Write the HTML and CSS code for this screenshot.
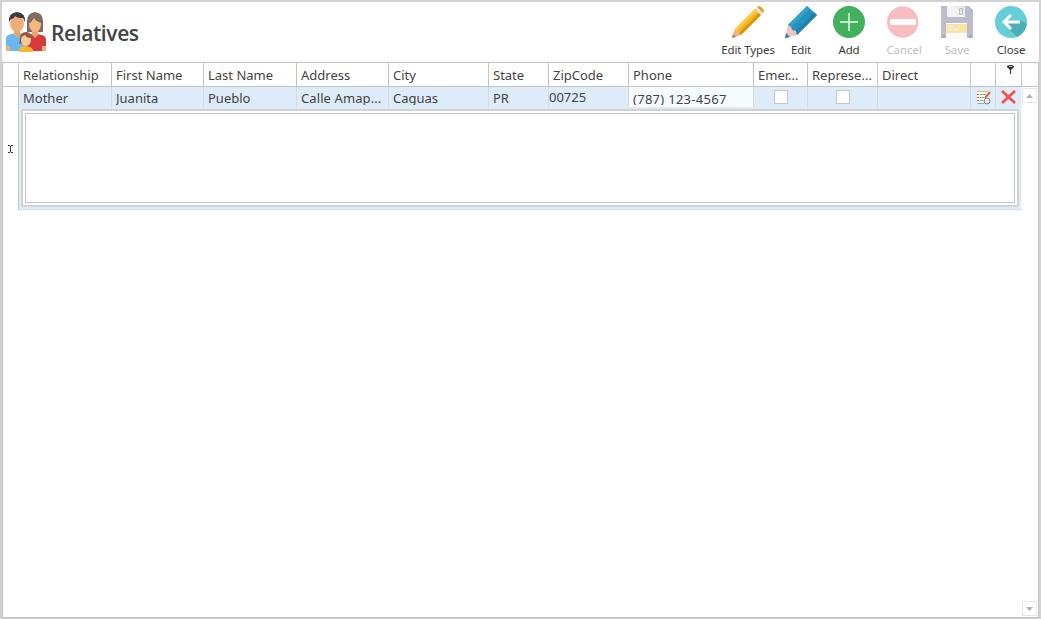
FILE: index.html
```html
<!DOCTYPE html>
<html lang="en">
<head>
    <meta charset="UTF-8">
    <title>Relatives</title>
    <link rel="stylesheet" href="styles.css">
</head>
<body>
    <div class="window">
        <header class="toolbar">
            <svg class="logo" viewBox="0 0 40 40">
                <path d="M0 39V27q0-4 5-5l4-1h5l6 3v15z" fill="#66b9f3"/>
                <path d="M20 39V25l6-3h5l5 1q4 1 4 5v11z" fill="#d63a3d"/>
                <path d="M21 20V9q0-8 8-9 8 1 8 9v11z" fill="#7d6d65"/>
                <path d="M8 18h6v5l-3 3-3-3zM26 17h6v6l-3 3-3-3z" fill="#e8a46d"/>
                <ellipse cx="11" cy="11.500" rx="7" ry="8.500" fill="#f0ad76"/>
                <path d="M3 10Q2 1 11 0q9 1 8 10l-2-4q-6 0-8-2-1 3-4 3z" fill="#3b3c40"/>
                <ellipse cx="29" cy="12" rx="6" ry="8" fill="#f5b680"/>
                <path d="M22 12V7q1-5 7-5 7 0 7 9-6-1-8-5-2 4-6 6z" fill="#7d6d65"/>
                <path d="M0 34h4v5H0zM36 34h4v5h-4z" fill="#efae79"/>
                <path d="M13 40v-2q0-4 6-4t8 4v2z" fill="#f6b632"/>
                <path d="M14 27q0-7 6-7t6 7l-2 4h-8l-3 1z" fill="#98582f"/>
                <ellipse cx="20" cy="28" rx="5" ry="6" fill="#fac99a"/>
                <path d="M15 25q1-4 5-4t5 5q-5 0-6-3z" fill="#98582f"/>
            </svg>
            <h1>Relatives</h1>
            <nav class="actions">
                <div class="action types">
                    <svg viewBox="0 0 32 32">
                        <path d="M0 32l3-9 6 6z" fill="#e8b48b"/>
                        <path d="M0 32l1-4 3 3z" fill="#a87c68"/>
                        <path d="M3 23L23 3l6 6L9 29z" fill="#f9b21b"/>
                        <path d="M7 27L27 7l2 2L9 29z" fill="#dc900f"/>
                        <path d="M3 23L23 3l2 2L5 25z" fill="#ffc846"/>
                        <path d="M23 3l2-2 6 6-2 2z" fill="#e3e3dc"/>
                        <path d="M25 1q2-2 4 0l2 2q2 2 0 4z" fill="#dda22c"/>
                    </svg>
                    <span>Edit Types</span>
                </div>
                <div class="action edit">
                    <svg viewBox="0 0 32 32">
                        <path d="M0 32l3-13 3-1 8 8-2 3z" fill="#f5c4bd"/>
                        <path d="M0 32l1-5 4 4z" fill="#2781a8"/>
                        <path d="M3 19L22 0l10 9-20 20-1-4-4-1-1-4z" fill="#2593bd"/>
                        <path d="M3 19L22 0l3 3L6 21z" fill="#35a1c9"/>
                        <path d="M11 25L29 6l3 3-20 20z" fill="#1d82ad"/>
                    </svg>
                    <span>Edit</span>
                </div>
                <div class="action add">
                    <svg viewBox="0 0 32 32">
                        <circle cx="16" cy="16" r="16" fill="#43b05c"/>
                        <path d="M16 7v18M7 16h18" stroke="#e8fbea" stroke-width="1.500"/>
                    </svg>
                    <span>Add</span>
                </div>
                <div class="action cancel disabled">
                    <svg viewBox="0 0 32 32">
                        <circle cx="15.700" cy="16" r="15.700" fill="#f7bdbf"/>
                        <rect x="3" y="13" width="26" height="6" rx="2" fill="#fff"/>
                    </svg>
                    <span>Cancel</span>
                </div>
                <div class="action save disabled">
                    <svg viewBox="0 0 32 32">
                        <path d="M0 0h28l4 4v28H0z" fill="#bbbdc8"/>
                        <path d="M6 0h18v11H6z" fill="#e9ebed"/>
                        <path d="M6 0h6l12 11H8q-2 0-2-2z" fill="#f2f3f4"/>
                        <path d="M18.500 2.500h3v6h-3z" fill="#e4e5ea" stroke="#bbbdc8"/>
                        <path d="M5 17h21v15H5z" fill="#fafafa"/>
                        <path d="M5 18h21v9H5z" fill="#f8e4a5"/>
                        <path d="M7 20.500h5M7 23.500h10" stroke="#fff"/>
                        <path d="M1 29h3v3H1zM28 29h3v3h-3z" fill="#a8abb6"/>
                    </svg>
                    <span>Save</span>
                </div>
                <div class="action close">
                    <svg viewBox="0 0 32 32">
                        <circle cx="16" cy="16" r="16" fill="#65cfd8"/>
                        <path d="M8 17l14 14q8-4 10-13l-7-4z" fill="#4bafba"/>
                        <path d="M16 9l-7 7 7 7M10 16h15" fill="none" stroke="#fff" stroke-width="3"/>
                    </svg>
                    <span>Close</span>
                </div>
            </nav>
        </header>

        <div class="grid head">
            <div></div>
            <div>Relationship</div>
            <div>First Name</div>
            <div>Last Name</div>
            <div>Address</div>
            <div>City</div>
            <div>State</div>
            <div>ZipCode</div>
            <div>Phone</div>
            <div>Emer...</div>
            <div>Represe...</div>
            <div>Direct</div>
            <div></div>
            <div class="filter">
                <svg width="7" height="9" viewBox="0 0 7 9">
                    <path d="M0 1q3.500-2 7 0v1L4 5v4H3V5L0 2z" fill="#333"/>
                    <path d="M2 1.500h3" stroke="#fff" stroke-width=".7"/>
                </svg>
            </div>
            <div></div>
        </div>

        <div class="body">
            <div class="gutter">
                <svg width="6" height="9" viewBox="0 0 6 9">
                    <path d="M0 .5h2M3 .5h2M0 7.500h2M3 7.500h2M2.500 1v6" stroke="#333" fill="none"/>
                </svg>
            </div>
            <div class="record">
                <div class="grid row">
                    <div><span>Mother</span></div>
                    <div><span>Juanita</span></div>
                    <div><span>Pueblo</span></div>
                    <div><span class="wide">Calle Amap...</span></div>
                    <div><span>Caguas</span></div>
                    <div><span>PR</span></div>
                    <div class="zip"><span>00725</span></div>
                    <div class="phone"><span>(787) 123-4567</span></div>
                    <div class="center"><i class="check"></i></div>
                    <div class="center"><i class="check"></i></div>
                    <div></div>
                    <div class="center">
                        <svg width="15" height="15" viewBox="0 0 15 15">
                            <path d="M1 1h11v13H1z" fill="#fff8e5"/>
                            <path d="M1 1.500h11" stroke="#e4b473" stroke-width="1"/>
                            <path d="M1 4.500h2M1 7.500h2M1 10.500h2" stroke="#ef5350" stroke-width="1.200"/>
                            <path d="M4 4.500h6M4 7.500h4M4 10.500h3M1 13.500h7" stroke="#6cc0b4"/>
                            <path d="M14 2L9 8" stroke="#eb603a" stroke-width="2"/>
                            <circle cx="11" cy="11" r="3" fill="#e5eff5" stroke="#77808a"/>
                        </svg>
                    </div>
                    <div class="center remove">
                        <svg width="15" height="14" viewBox="0 0 15 14">
                            <path d="M1 1l13 12M14 1L1 13" stroke="#f6504f" stroke-width="2.800"/>
                        </svg>
                    </div>
                </div>
                <div class="detail"><div class="notes"></div></div>
            </div>
            <div class="scrollbar">
                <div class="arrow"><svg width="7" height="4" viewBox="0 0 7 4"><path d="M0 4L3.500 0 7 4z" fill="#b0b0b0"/></svg></div>
                <div class="arrow"><svg width="7" height="4" viewBox="0 0 7 4"><path d="M0 0h7L3.500 4z" fill="#b0b0b0"/></svg></div>
            </div>
        </div>
    </div>
</body>
</html>
```
FILE: styles.css
```css
* {
    box-sizing: border-box;
}
body {
    margin: 0;
    font-family: "Noto Sans", "Open Sans", sans-serif;
    font-size: 13px;
    color: #444;
    background: #fff;
}
.window {
    height: 619px;
    border: 2px solid #d2d2d2;
    border-bottom-width: 1px;
    display: flex;
    flex-direction: column;
}
svg {
    display: block;
}
.toolbar {
    height: 60px;
    display: flex;
    align-items: flex-start;
    padding-left: 4px;
}
.logo {
    width: 40px;
    height: 40px;
    margin-top: 9.5px;
}
h1 {
    margin: 17px 0 0 5px;
    font-family: "Open Sans", sans-serif;
    font-size: 21px;
    line-height: 28px;
    font-weight: 600;
    letter-spacing: -0.4px;
}
.actions {
    display: flex;
    margin-left: auto;
    padding: 4px 6px 0 0;
}
.action {
    width: 44px;
    display: flex;
    flex-direction: column;
    align-items: center;
    font-size: 11.5px;
    line-height: 16px;
    letter-spacing: -0.1px;
    color: #3a3a3a;
    white-space: nowrap;
}
.action svg {
    width: 32px;
    height: 32px;
    margin-bottom: 4px;
}
.types {
    width: 54px;
}
.edit,
.add {
    margin-left: 4px;
}
.cancel,
.save,
.close {
    margin-left: 10px;
}
.cancel span {
    padding-left: 2px;
}
.disabled {
    color: #c0c0c0;
}
.grid {
    display: grid;
    grid-template-columns: 93px 92px 93px 92px 100px 60px 80px 125px 54px 70px 93px 25px 26px;
}
.grid > div {
    padding-left: 4px;
    border-right: 1px solid #c4c4c4;
    white-space: nowrap;
    overflow: hidden;
}
.head {
    grid-template-columns: 17px 93px 92px 93px 92px 100px 60px 80px 125px 54px 70px 93px 25px 26px 17px;
    height: 25px;
    line-height: 24px;
    border: 1px solid #c4c4c4;
    border-right: 0;
    border-left: 0;
}
.head > div:first-child {
    border-left: 1px solid #c4c4c4;
}
.filter {
    padding: 2px 0 0 11px !important;
}
.body {
    flex: 1;
    display: flex;
    border: 1px solid #c4c4c4;
    border-top: 0;
}
.gutter {
    width: 16px;
    padding: 58px 0 0 5px;
}
.record {
    width: 1003px;
    height: 123px;
    margin-left: -1px;
    border-left: 1px solid #c4c4c4;
    border-bottom: 1px solid #d5dce3;
    background: #deebf9;
}
.row {
    height: 20px;
    line-height: 22px;
}
.row > div {
    border-color: #d5dae0;
}
.row > div:last-child {
    border: 0;
}
.row span {
    display: block;
    height: 18px;
    overflow: hidden;
}
.row .wide {
    letter-spacing: 0.1px;
}
.row > .zip {
    padding-left: 0;
    line-height: 21px;
}
.row > .phone {
    background: #f6fbfe;
    line-height: 24px;
    letter-spacing: 0.28px;
}
.row > .center {
    display: flex;
    align-items: center;
    justify-content: center;
    padding: 0;
}
.row > .remove {
    padding-right: 2px;
}
.check {
    width: 14px;
    height: 14px;
    background: #fff;
    border: 1px solid #c6c6c6;
}
.detail {
    margin: 2px 2px 0 2px;
    height: 98px;
    padding: 2px;
    border: 2px solid #d0d3d5;
    border-radius: 2px;
    background: #fff;
}
.notes {
    height: 90px;
    border: 1px solid #c4c4c4;
}
.scrollbar {
    width: 17px;
    display: flex;
    flex-direction: column;
    justify-content: space-between;
    padding: 1px 1px 1px 1px;
}
.arrow {
    width: 15px;
    height: 15px;
    display: flex;
    align-items: center;
    justify-content: center;
    border: 1px solid #e6e6e6;
}
```
